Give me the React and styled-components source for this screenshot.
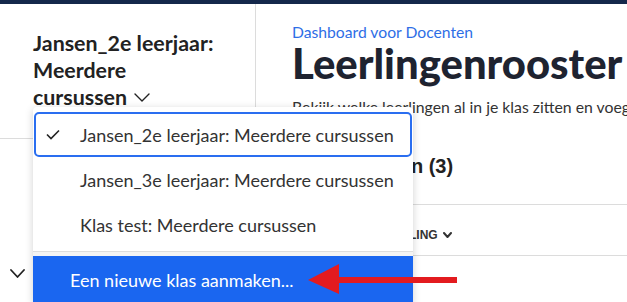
import React from "react";
import { styled, createGlobalStyle } from "styled-components";

const GlobalStyle = createGlobalStyle`
  body {
    margin: 0;
    font-family: Lato, "Noto Sans", sans-serif;
    background: #ffffff;
    color: #222;
  }
`;

const Page = styled.div`
  position: relative;
  width: 627px;
  height: 302px;
  overflow: hidden;
`;

const TopBar = styled.div`
  height: 4px;
  background: #14284b;
`;

const Layout = styled.div`
  display: flex;
  height: 298px;
`;

const Sidebar = styled.aside`
  flex: 0 0 255px;
  border-right: 1px solid #dcdcdc;
  display: flex;
  flex-direction: column;
`;

const SidebarHeader = styled.div`
  height: 135px;
  padding: 26px 0 0 33px;
  box-sizing: border-box;
  border-bottom: 1px solid #dcdcdc;
`;

const ClassTitle = styled.h2`
  margin: 0;
  font-size: 21.4px;
  line-height: 27px;
  font-weight: 700;
  color: #222;
  width: 205px;
`;

const NoWrap = styled.span`
  white-space: nowrap;
  svg {
    margin-left: 7px;
    vertical-align: 3px;
  }
`;

const SidebarRow = styled.div`
  display: flex;
  align-items: center;
  padding: 130px 0 0 10px;
`;

const Main = styled.main`
  flex: 1;
  min-width: 0;
  display: flex;
  flex-direction: column;
  overflow: hidden;
`;

const Intro = styled.div`
  padding: 19px 0 0 36px;
`;

const Eyebrow = styled.div`
  font-size: 15.7px;
  line-height: 18px;
  color: #2e6ee6;
  white-space: nowrap;
`;

const Heading = styled.h1`
  margin: 0;
  font-size: 41.8px;
  line-height: 44px;
  font-weight: 900;
  color: #1e2330;
  white-space: nowrap;
`;

const Description = styled.p`
  margin: 12px 0 0;
  font-size: 15.8px;
  line-height: 20px;
  color: #333;
  white-space: nowrap;
`;

const Tabs = styled.div`
  height: 88px;
  display: flex;
  align-items: flex-start;
  padding: 38px 0 0 66px;
  border-bottom: 1px solid #dcdcdc;
  box-sizing: border-box;
`;

const Tab = styled.div`
  font-family: "Liberation Sans", Arial, sans-serif;
  font-size: 20px;
  line-height: 23px;
  font-weight: 700;
  color: #222;
`;

const TableHead = styled.div`
  height: 51px;
  display: flex;
  align-items: center;
  padding: 10px 0 0 36px;
  border-bottom: 1px solid #dcdcdc;
  box-sizing: border-box;
`;

const ColumnLabel = styled.div`
  display: flex;
  align-items: center;
  gap: 5px;
  font-family: "Liberation Sans", Arial, sans-serif;
  font-size: 12px;
  font-weight: 700;
  color: #333;
  margin-left: ${(p) => p.$offset || 0}px;
`;

const Menu = styled.div`
  position: absolute;
  left: 33px;
  top: 107px;
  width: 380px;
  background: #fff;
  border-radius: 4px;
  box-shadow: 0 2px 8px rgba(0, 0, 0, 0.18);
  padding-top: 5px;
`;

const Option = styled.div`
  height: 45px;
  margin: 0 1px;
  box-sizing: border-box;
  display: flex;
  align-items: center;
  padding-left: 10px;
  font-size: 18px;
  color: #333;
  white-space: nowrap;
  border: 2px solid ${(p) => (p.$selected ? "#2a6ef0" : "transparent")};
  border-radius: 5px;
`;

const CheckSlot = styled.span`
  flex: 0 0 34px;
  display: flex;
  align-items: center;
`;

const Divider = styled.div`
  margin-top: 4px;
  border-top: 1px solid #dddddd;
  height: 4px;
  background: #f4f4f4;
`;

const CreateOption = styled.div`
  height: 48px;
  display: flex;
  align-items: center;
  padding-left: 37px;
  background: #1a66f0;
  color: #fff;
  font-size: 18px;
`;

const Arrow = styled.svg`
  position: absolute;
  left: 300px;
  top: 260px;
`;

const Chevron = ({ w = 14, h = 8, stroke = 1.5, color = "#222" }) => (
  <svg width={w} height={h} viewBox={`0 0 ${w} ${h}`}>
    <polyline
      points={`1,1 ${w / 2},${h - 1} ${w - 1},1`}
      fill="none"
      stroke={color}
      strokeWidth={stroke}
      strokeLinecap="round"
      strokeLinejoin="round"
    />
  </svg>
);

const classes = [
  "Jansen_2e leerjaar: Meerdere cursussen",
  "Jansen_3e leerjaar: Meerdere cursussen",
  "Klas test: Meerdere cursussen",
];

export default function App() {
  return (
    <Page>
      <GlobalStyle />
      <TopBar />
      <Layout>
        <Sidebar>
          <SidebarHeader>
            <ClassTitle>
              Jansen_2e leerjaar: Meerdere{" "}
              <NoWrap>
                cursussen
                <Chevron w={16} h={9} stroke={1.4} />
              </NoWrap>
            </ClassTitle>
          </SidebarHeader>
          <SidebarRow>
            <Chevron w={15} h={9} stroke={1.8} />
          </SidebarRow>
        </Sidebar>
        <Main>
          <Intro>
            <Eyebrow>Dashboard voor Docenten</Eyebrow>
            <Heading>Leerlingenrooster</Heading>
            <Description>
              Bekijk welke leerlingen al in je klas zitten en voeg nieuwe leerlingen toe.
            </Description>
          </Intro>
          <Tabs>
            <Tab>Leerlingen (3)</Tab>
          </Tabs>
          <TableHead>
            <ColumnLabel $offset={23}>
              SORTEER: INDELING
              <Chevron w={9} h={6} stroke={2} color="#333" />
            </ColumnLabel>
          </TableHead>
        </Main>
      </Layout>

      <Menu>
        {classes.map((name, i) => (
          <Option key={name} $selected={i === 0}>
            <CheckSlot>
              {i === 0 && (
                <svg width="14" height="11" viewBox="0 0 14 11">
                  <polyline
                    points="1,5.5 5,9.5 13,1.5"
                    fill="none"
                    stroke="#222"
                    strokeWidth="1.6"
                  />
                </svg>
              )}
            </CheckSlot>
            {name}
          </Option>
        ))}
        <Divider />
        <CreateOption>Een nieuwe klas aanmaken...</CreateOption>
      </Menu>

      <Arrow width="160" height="40" viewBox="0 0 160 40">
        <polygon points="8,20 39,4 39,34" fill="#e31b1f" />
        <rect x="38" y="17" width="119" height="6" fill="#e31b1f" />
      </Arrow>
    </Page>
  );
}
